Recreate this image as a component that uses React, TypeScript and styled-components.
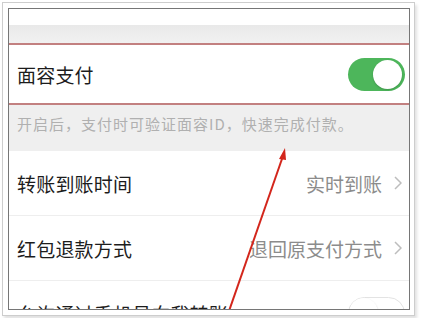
import React from "react";
import styled, { createGlobalStyle } from "styled-components";

const Global = createGlobalStyle`
  html, body { margin: 0; padding: 0; background: #ffffff; }
  body { font-family: "Noto Sans CJK SC", "Noto Sans", sans-serif; }
`;

const Mat = styled.div`
  margin: 2px;
  width: fit-content;
  border: 1px solid #cdcdcd;
  padding: 5px 4px 5px 5px;
  background: #fff;
  box-shadow: 2px 3px 3px rgba(0, 0, 0, 0.12);
`;

const Screen = styled.div`
  position: relative;
  width: 400px;
  height: 300px;
  border: 1px solid #767676;
  overflow: hidden;
  background: #fff;
  display: flex;
  flex-direction: column;
`;

const TopWhite = styled.div`
  height: 16px;
  flex: none;
  background: #fff;
`;

const GrayBand = styled.div<{ $h: number }>`
  height: ${(p) => p.$h}px;
  flex: none;
  background: linear-gradient(#e9e9e9, #f1f1f1);
`;

const Row = styled.div<{ $h: number; $line?: boolean; $mark?: boolean }>`
  flex: none;
  height: ${(p) => p.$h}px;
  display: flex;
  align-items: center;
  justify-content: space-between;
  padding: 0 4px 0 8px;
  background: #fff;
  box-sizing: border-box;
  border-bottom: ${(p) => (p.$line ? "1px solid #eeeeee" : "none")};
  ${(p) =>
    p.$mark
      ? "border-top: 2px solid #c28080; border-bottom: 2px solid #c28080;"
      : ""}
`;

const Label = styled.span`
  font-size: 19px;
  color: #1c1c1c;
  letter-spacing: 0.2px;
`;

const Right = styled.span`
  display: flex;
  align-items: center;
  gap: 12px;
  padding-right: 3px;
`;

const Value = styled.span`
  font-size: 19px;
  color: #8c8c8c;
`;

const Desc = styled.div`
  flex: none;
  height: 46px;
  box-sizing: border-box;
  padding: 9px 0 0 8px;
  background: #efefef;
  font-size: 15px;
  line-height: 20px;
  color: #b0b0b0;
  letter-spacing: 1px;
`;

const Switch = styled.div<{ $on: boolean }>`
  position: relative;
  width: 57px;
  height: 33px;
  border-radius: 17px;
  box-sizing: border-box;
  background: ${(p) => (p.$on ? "#4db65b" : "#fff")};
  border: ${(p) => (p.$on ? "none" : "1.5px solid #e3e3e3")};
  flex: none;
  &::after {
    content: "";
    position: absolute;
    top: ${(p) => (p.$on ? "2px" : "0")};
    left: ${(p) => (p.$on ? "25px" : "0")};
    width: 29px;
    height: 29px;
    border-radius: 50%;
    background: #fff;
    box-shadow: 0 1px 2px rgba(0, 0, 0, 0.18);
  }
`;

const Arrow = styled.svg`
  position: absolute;
  left: 0;
  top: 0;
  pointer-events: none;
`;

const Chevron = () => (
  <svg width="8" height="14" viewBox="0 0 8 14">
    <polyline points="1,1 7,7 1,13" fill="none" stroke="#bdbdbd" strokeWidth="1.5" />
  </svg>
);

export default function App() {
  return (
    <>
      <Global />
      <Mat>
        <Screen>
          <TopWhite />
          <GrayBand $h={18} />
          <Row $h={62} $mark>
            <Label>面容支付</Label>
            <Switch $on />
          </Row>
          <Desc>开启后，支付时可验证面容ID，快速完成付款。</Desc>
          <Row $h={65} $line>
            <Label>转账到账时间</Label>
            <Right>
              <Value>实时到账</Value>
              <Chevron />
            </Right>
          </Row>
          <Row $h={65} $line>
            <Label>红包退款方式</Label>
            <Right>
              <Value>退回原支付方式</Value>
              <Chevron />
            </Right>
          </Row>
          <Row $h={64}>
            <Label>允许通过手机号向我转账</Label>
            <Switch $on={false} />
          </Row>
          <Arrow width="400" height="300" viewBox="0 0 400 300">
            <line x1="220" y1="302" x2="274" y2="147" stroke="#d3261c" strokeWidth="2" />
            <polygon points="276,139 270,150 277,151" fill="#d3261c" />
          </Arrow>
        </Screen>
      </Mat>
    </>
  );
}
